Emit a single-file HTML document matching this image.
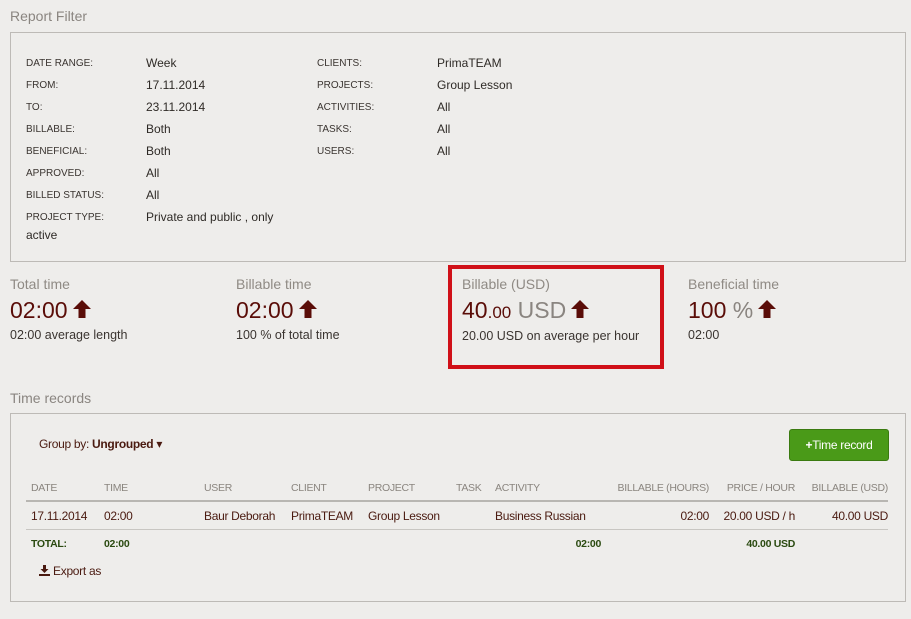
<!DOCTYPE html>
<html><head><meta charset="utf-8"><style>
body{margin:0;width:911px;height:619px;background:#eeedeb;font-family:"Liberation Sans",sans-serif;color:#3a2e24;position:relative;overflow:hidden}
.a{position:absolute;white-space:nowrap}
.h{font-size:14px;color:#8a8580}
.box{position:absolute;border:1px solid #bdbab6;background:#eeedeb}
.k{font-size:10px;color:#3a3430}
.v{font-size:12px;color:#2e2a26}
.lab{font-size:14px;color:#8f8a84}
.big{font-size:23px;color:#5a0d08}
.sub{font-size:12.5px;color:#3a3430}
.n{font-size:12px;letter-spacing:-0.3px}
.th{color:#8a857f;font-size:10.5px}
.td{color:#4a1a10}
.tt{color:#2a4a10;font-weight:bold;font-size:10.5px}
.ar{display:inline-block;vertical-align:-1px;margin-left:4px}
</style></head><body>
<div class="a h" style="left:10px;top:8px">Report Filter</div>
<div class="box" style="left:10px;top:32px;width:894px;height:228px"></div>
<div class="a k" style="left:26px;top:53px;line-height:22px">DATE RANGE:<br>FROM:<br>TO:<br>BILLABLE:<br>BENEFICIAL:<br>APPROVED:<br>BILLED STATUS:<br>PROJECT TYPE:</div>
<div class="a v" style="left:146px;top:52px;line-height:22px">Week<br>17.11.2014<br>23.11.2014<br>Both<br>Both<br>All<br>All<br>Private and public , only</div>
<div class="a v" style="left:26px;top:228px">active</div>
<div class="a k" style="left:317px;top:53px;line-height:22px">CLIENTS:<br>PROJECTS:<br>ACTIVITIES:<br>TASKS:<br>USERS:</div>
<div class="a v" style="left:437px;top:52px;line-height:22px">PrimaTEAM<br>Group Lesson<br>All<br>All<br>All</div>

<div class="a lab" style="left:10px;top:276px">Total time</div>
<div class="a big" style="left:10px;top:297px">02:00<svg class="ar" width="20" height="20" viewBox="0 0 20 20"><path d="M10 1 L19 10 L13.5 10 L13.5 19 L6.5 19 L6.5 10 L1 10 Z" fill="#5a0d08"/></svg></div>
<div class="a sub" style="left:10px;top:328px">02:00 average length</div>
<div class="a lab" style="left:236px;top:276px">Billable time</div>
<div class="a big" style="left:236px;top:297px">02:00<svg class="ar" width="20" height="20" viewBox="0 0 20 20"><path d="M10 1 L19 10 L13.5 10 L13.5 19 L6.5 19 L6.5 10 L1 10 Z" fill="#5a0d08"/></svg></div>
<div class="a sub" style="left:236px;top:328px">100 % of total time</div>
<div class="a" style="left:448px;top:265px;width:208px;height:96px;border:4px solid #d01018"></div>
<div class="a lab" style="left:462px;top:276px">Billable (USD)</div>
<div class="a big" style="left:462px;top:297px">40<span style="font-size:17px">.00</span> <span style="color:#8a8580">USD</span><svg class="ar" width="20" height="20" viewBox="0 0 20 20"><path d="M10 1 L19 10 L13.5 10 L13.5 19 L6.5 19 L6.5 10 L1 10 Z" fill="#5a0d08"/></svg></div>
<div class="a sub" style="left:462px;top:329px">20.00 USD on average per hour</div>
<div class="a lab" style="left:688px;top:276px">Beneficial time</div>
<div class="a big" style="left:688px;top:297px">100 <span style="color:#8a8580">%</span><svg class="ar" width="20" height="20" viewBox="0 0 20 20"><path d="M10 1 L19 10 L13.5 10 L13.5 19 L6.5 19 L6.5 10 L1 10 Z" fill="#5a0d08"/></svg></div>
<div class="a sub" style="left:688px;top:328px">02:00</div>

<div class="a h" style="left:10px;top:390px">Time records</div>
<div class="box" style="left:10px;top:413px;width:894px;height:187px"></div>
<div class="a n" style="left:39px;top:437px;color:#4a1a10">Group by: <b>Ungrouped</b> &#9662;</div>
<div class="a n" style="left:789px;top:429px;width:98px;height:30px;background:#4a9a18;border:1px solid #3a7a10;border-radius:3px;color:#fff;line-height:30px;text-align:center;font-size:12px"><b>+</b>Time record</div>
<div class="a n th" style="left:31px;top:482px">DATE</div>
<div class="a n th" style="left:104px;top:482px">TIME</div>
<div class="a n th" style="left:204px;top:482px">USER</div>
<div class="a n th" style="left:291px;top:482px">CLIENT</div>
<div class="a n th" style="left:368px;top:482px">PROJECT</div>
<div class="a n th" style="left:456px;top:482px">TASK</div>
<div class="a n th" style="left:495px;top:482px">ACTIVITY</div>
<div class="a n th" style="right:202px;top:482px">BILLABLE (HOURS)</div>
<div class="a n th" style="right:116px;top:482px">PRICE / HOUR</div>
<div class="a n th" style="right:23px;top:482px">BILLABLE (USD)</div>
<div class="a" style="left:26px;top:500px;width:862px;height:2px;background:#b8b6b2"></div>
<div class="a n td" style="left:31px;top:509px">17.11.2014</div>
<div class="a n td" style="left:104px;top:509px">02:00</div>
<div class="a n td" style="left:204px;top:509px">Baur Deborah</div>
<div class="a n td" style="left:291px;top:509px">PrimaTEAM</div>
<div class="a n td" style="left:368px;top:509px">Group Lesson</div>
<div class="a n td" style="left:495px;top:509px">Business Russian</div>
<div class="a n td" style="right:202px;top:509px">02:00</div>
<div class="a n td" style="right:116px;top:509px">20.00 USD / h</div>
<div class="a n td" style="right:23px;top:509px">40.00 USD</div>
<div class="a" style="left:26px;top:529px;width:862px;height:1px;background:#c8c6c2"></div>
<div class="a n tt" style="left:31px;top:538px">TOTAL:</div>
<div class="a n tt" style="left:104px;top:538px">02:00</div>
<div class="a n tt" style="right:310px;top:538px">02:00</div>
<div class="a n tt" style="right:116px;top:538px">40.00 USD</div>
<div class="a n" style="left:39px;top:564px;color:#4a1a10"><svg width="11" height="11" viewBox="0 0 11 11" style="vertical-align:-1px"><path d="M4 0 H7 V4 H9.5 L5.5 8 L1.5 4 H4 Z M0 9 H11 V11 H0 Z" fill="#4a1a10"/></svg> Export as</div>
</body></html>
